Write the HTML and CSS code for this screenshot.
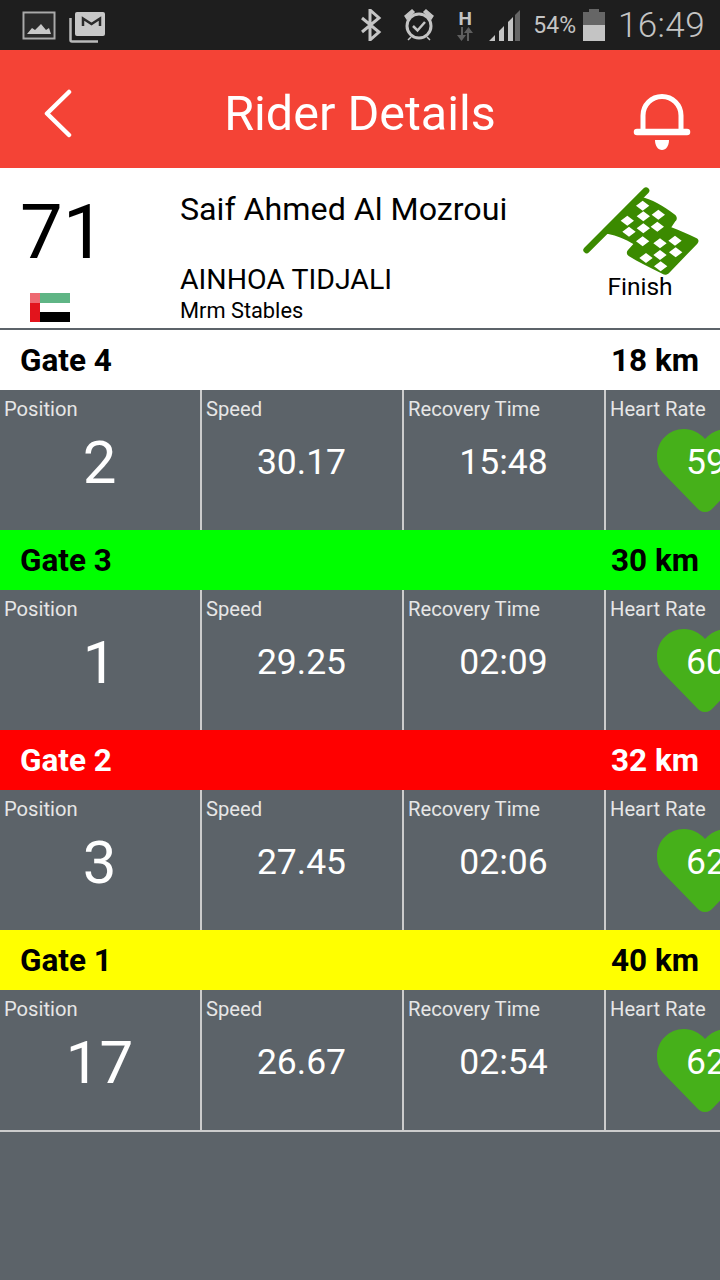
FILE: index.html
```html
<!DOCTYPE html>
<html lang="en">
<head>
<meta charset="utf-8">
<title>Rider Details</title>
<link rel="stylesheet" href="styles.css">
</head>
<body>
<div class="status">
  <svg class="s-img" viewBox="0 0 34 30" width="34" height="30"><rect x="1.500" y="1.500" width="31" height="26" fill="none" stroke="#aaa" stroke-width="2"/><rect x="3" y="3" width="28" height="23" fill="#2a2a2a"/><path d="M5 23 L10 17 L13 19 L19 13 L24 19 L27 17 L29 23Z" fill="#c8c8c8"/></svg>
  <svg class="s-gm" viewBox="0 0 38 32" width="38" height="32"><path d="M1.500 7V29a1.500 1.500 0 0 0 1.500 1.500H29" fill="none" stroke="#bbb" stroke-width="2.500"/><rect x="6" y="1" width="30" height="24" rx="2" fill="#c8c8c8"/><path d="M14 15V7.500L22.500 13 31 7.500V15" fill="none" stroke="#2b2b2b" stroke-width="2.500"/></svg>
  <div class="s-right">
    <svg viewBox="0 0 22 32" width="22" height="32" class="s-bt"><path d="M2 9 L19 23 L10 31 V1 L19 9 L2 23" fill="none" stroke="#c4c4c4" stroke-width="3"/></svg>
    <svg viewBox="0 0 32 34" width="32" height="34" class="s-al"><circle cx="16" cy="18" r="12" fill="none" stroke="#c4c4c4" stroke-width="3"/><path d="M10 18l4.500 4.500L22 14" fill="none" stroke="#c4c4c4" stroke-width="2.500"/><path d="M2 8 L9 2 L11 4 L4 11Z M30 8 L23 2 L21 4 L28 11Z M8 29l-3 3M24 29l3 3" fill="#c4c4c4" stroke="#c4c4c4" stroke-width="1.500"/></svg>
    <div class="s-h"><span class="s-hh">H</span><svg viewBox="0 0 20 14" width="20" height="14"><path d="M6 14V6H2L6.500 0 11 6H8v8ZM14 0v8h4l-4.500 6L9 8h3V0Z" transform="matrix(1 0 0 -1 0 14)" fill="#5e5e5e"/></svg></div>
    <svg viewBox="0 0 32 32" width="32" height="32" class="s-sig"><path d="M1 31 L7 25 V31Z M11 31 V21 L16 16 V31Z M20 31 V12 L25 7 V31Z" fill="#c4c4c4"/><path d="M27 31 V5 L32 0 V31Z" fill="#666"/></svg>
    <span class="s-pct">54%</span>
    <div class="s-bat"><div class="s-cap"></div><div class="s-empty"></div><div class="s-full"></div></div>
    <span class="s-time">16:49</span>
  </div>
</div>

<header class="bar">
  <svg class="back" viewBox="0 0 30 50" width="30" height="50"><path d="M27 3 L5 24.500 L27 46" fill="none" stroke="#fff" stroke-width="4.500" stroke-linecap="round" stroke-linejoin="round"/></svg>
  <h1 class="title">Rider Details</h1>
  <svg class="bell" viewBox="0 0 58 60" width="58" height="60"><path d="M10 40V23.500a19 19 0 0 1 38 0V40" fill="none" stroke="#fff" stroke-width="5"/><path d="M4 40H54" stroke="#fff" stroke-width="6.500" stroke-linecap="round"/><path d="M22 48H36C36 54 33 58 29 58S22 54 22 48Z" fill="#fff"/></svg>
</header>

<section class="rider">
  <div class="num-col">
    <div class="num">71</div>
    <svg class="flag" viewBox="0 0 40 29" width="40" height="29"><rect x="10" width="30" height="10" fill="#5fb585"/><rect x="10" y="10" width="30" height="9" fill="#fff"/><rect x="10" y="19" width="30" height="10" fill="#000"/><rect width="10" height="29" fill="#e2141c"/><rect width="10" height="10" fill="#ee6a72"/></svg>
  </div>
  <div class="info">
    <div class="name">Saif Ahmed Al Mozroui</div>
    <div class="horse">AINHOA TIDJALI</div>
    <div class="stable">Mrm Stables</div>
  </div>
  <div class="finish">
    <svg viewBox="0 0 360 288" width="120" height="96" class="fin-flag">
      <path d="M20 198 L198 20" stroke="#3b8a00" stroke-width="20" stroke-linecap="round"/>
      <path d="M180 38 C215 45 250 65 285 92 C292 98 292 106 286 112 L274 130 C300 140 325 150 350 163 C357 167 357 174 352 179 L268 266 C260 274 252 274 244 268 C210 250 175 235 146 216 C139 210 139 204 144 198 L160 180 C135 165 110 155 85 150 L60 150Z" fill="#3b8a00"/>
      <path fill="#fff" d="M188 50l20 15-20 15-20-15ZM235 77l20 15-20 15-20-15ZM190 82l20 15-20 15-20-15ZM142 95l20 15-20 15-20-15ZM232 113l20 15-20 15-20-15ZM190 118l20 15-20 15-20-15ZM147 128l20 15-20 15-20-15ZM188 157l20 15-20 15-20-15ZM285 155l20 15-20 15-20-15ZM240 163l20 15-20 15-20-15ZM287 190l20 15-20 15-20-15ZM240 198l20 15-20 15-20-15ZM198 207l20 15-20 15-20-15ZM242 232l20 15-20 15-20-15Z"/>
    </svg>
    <div class="fin-label">Finish</div>
  </div>
</section>

<div class="gate g-white"><span>Gate 4</span><span>18 km</span></div>
<div class="stats">
  <div class="cell"><div class="lbl">Position</div><div class="val big">2</div></div>
  <div class="cell"><div class="lbl">Speed</div><div class="val">30.17</div></div>
  <div class="cell"><div class="lbl">Recovery Time</div><div class="val">15:48</div></div>
  <div class="cell hr"><div class="lbl">Heart Rate</div><div class="heart"><svg viewBox="0 0 96 83" width="96" height="83"><path d="M48 83C44 83 42 81 40 79L7 45C2 40 0 34 0 27 0 12 12 0 27 0 35 0 43 4 48 10 53 4 61 0 69 0 84 0 96 12 96 27 96 34 94 40 89 45L56 79C54 81 52 83 48 83Z" fill="#46b01a"/></svg><span class="bpm">59</span></div></div>
</div>

<div class="gate g-green"><span>Gate 3</span><span>30 km</span></div>
<div class="stats">
  <div class="cell"><div class="lbl">Position</div><div class="val big">1</div></div>
  <div class="cell"><div class="lbl">Speed</div><div class="val">29.25</div></div>
  <div class="cell"><div class="lbl">Recovery Time</div><div class="val">02:09</div></div>
  <div class="cell hr"><div class="lbl">Heart Rate</div><div class="heart"><svg viewBox="0 0 96 83" width="96" height="83"><path d="M48 83C44 83 42 81 40 79L7 45C2 40 0 34 0 27 0 12 12 0 27 0 35 0 43 4 48 10 53 4 61 0 69 0 84 0 96 12 96 27 96 34 94 40 89 45L56 79C54 81 52 83 48 83Z" fill="#46b01a"/></svg><span class="bpm">60</span></div></div>
</div>

<div class="gate g-red"><span>Gate 2</span><span>32 km</span></div>
<div class="stats">
  <div class="cell"><div class="lbl">Position</div><div class="val big">3</div></div>
  <div class="cell"><div class="lbl">Speed</div><div class="val">27.45</div></div>
  <div class="cell"><div class="lbl">Recovery Time</div><div class="val">02:06</div></div>
  <div class="cell hr"><div class="lbl">Heart Rate</div><div class="heart"><svg viewBox="0 0 96 83" width="96" height="83"><path d="M48 83C44 83 42 81 40 79L7 45C2 40 0 34 0 27 0 12 12 0 27 0 35 0 43 4 48 10 53 4 61 0 69 0 84 0 96 12 96 27 96 34 94 40 89 45L56 79C54 81 52 83 48 83Z" fill="#46b01a"/></svg><span class="bpm">62</span></div></div>
</div>

<div class="gate g-yellow"><span>Gate 1</span><span>40 km</span></div>
<div class="stats last">
  <div class="cell"><div class="lbl">Position</div><div class="val big">17</div></div>
  <div class="cell"><div class="lbl">Speed</div><div class="val">26.67</div></div>
  <div class="cell"><div class="lbl">Recovery Time</div><div class="val">02:54</div></div>
  <div class="cell hr"><div class="lbl">Heart Rate</div><div class="heart"><svg viewBox="0 0 96 83" width="96" height="83"><path d="M48 83C44 83 42 81 40 79L7 45C2 40 0 34 0 27 0 12 12 0 27 0 35 0 43 4 48 10 53 4 61 0 69 0 84 0 96 12 96 27 96 34 94 40 89 45L56 79C54 81 52 83 48 83Z" fill="#46b01a"/></svg><span class="bpm">62</span></div></div>
</div>
</body>
</html>
```
FILE: styles.css
```css
* { box-sizing: border-box; margin: 0; padding: 0; }
html, body { width: 720px; height: 1280px; overflow: hidden; }
body { background: #5c6369; font-family: Roboto, sans-serif; color: #fff; display: flex; flex-direction: column; }

.status { height: 50px; background: #1e1e1e; display: flex; align-items: center; padding: 0 15px 0 22px; flex: none; }
.s-img { margin-right: 13px; margin-top: 1px; }
.s-gm { margin-top: 3px; }
.s-right { margin-left: auto; display: flex; align-items: center; }
.s-bt { margin-right: 21px; }
.s-al { margin-right: 20px; }
.s-h { width: 20px; display: flex; flex-direction: column; align-items: center; margin-right: 13px; }
.s-hh { font: 700 19px/17px Roboto, sans-serif; color: #c4c4c4; }
.s-sig { margin-right: 13px; margin-top: 2px; }
.s-pct { font-size: 23px; color: #c4c4c4; margin-right: 7px; }
.s-bat { width: 22px; height: 32px; display: flex; flex-direction: column; align-items: center; margin-right: 13px; }
.s-cap { width: 10px; height: 3px; background: #666; }
.s-empty { width: 22px; height: 13px; background: #666; }
.s-full { width: 22px; height: 16px; background: #c4c4c4; }
.s-time { font-size: 35px; font-weight: 300; color: #c4c4c4; letter-spacing: .4px; }

.bar { height: 118px; background: #f44336; display: flex; align-items: center; justify-content: center; position: relative; flex: none; padding-top: 11px; }
.title { font-size: 48.500px; font-weight: 400; line-height: 1; }
.back { position: absolute; left: 42px; top: 39px; }
.bell { position: absolute; left: 633px; top: 42px; }

.rider { height: 162px; background: #fff; border-bottom: 2px solid #5c6369; color: #000; display: flex; flex: none; }
.num-col { width: 180px; position: relative; }
.num { font-size: 76px; line-height: 76px; position: absolute; left: 20px; top: 26px; font-weight: 400; }
.flag { position: absolute; left: 30px; top: 125px; }
.info { flex: 1; padding-top: 23px; }
.name { font-size: 32.200px; line-height: 36px; }
.horse { font-size: 28.500px; line-height: 30px; margin-top: 38px; }
.stable { font-size: 21.800px; line-height: 26px; margin-top: 3px; }
.finish { width: 137px; position: relative; }
.fin-flag { position: absolute; left: -3px; top: 16px; }
.fin-label { font-size: 24.500px; line-height: 28px; position: absolute; top: 105px; left: 0; width: 114px; text-align: center; }

.gate { height: 60px; display: flex; justify-content: space-between; align-items: center; padding: 1px 21px 0 20px; font-size: 31.500px; font-weight: 700; flex: none; color: #000; }
.g-white { background: #fff; }
.g-green { background: #0f0; }
.g-red { background: #f00; color: #fff; }
.g-yellow { background: #ff0; }

.stats { height: 140px; display: grid; grid-template-columns: 202px 202px 202px 1fr; flex: none; }
.stats.last { height: 142px; border-bottom: 2px solid #ccc; }
.cell { border-right: 2px solid #ccc; padding: 7px 0 0 4px; display: flex; flex-direction: column; overflow: hidden; min-width: 0; }
.cell.hr { border-right: 0; padding-left: 4px; }
.lbl { font-size: 20.200px; line-height: 24px; color: #e6e6e6; white-space: nowrap; }
.val { font-size: 35.500px; line-height: 42px; text-align: center; margin-top: 20px; padding-right: 5px; }
.val.big { font-size: 60px; line-height: 60px; margin-top: 12px; }
.heart { position: relative; width: 96px; height: 83px; margin: 8px 0 0 47px; flex: none; }
.heart svg { display: block; }
.bpm { position: absolute; left: 29px; top: 12px; font-size: 35.500px; line-height: 42px; }
```
